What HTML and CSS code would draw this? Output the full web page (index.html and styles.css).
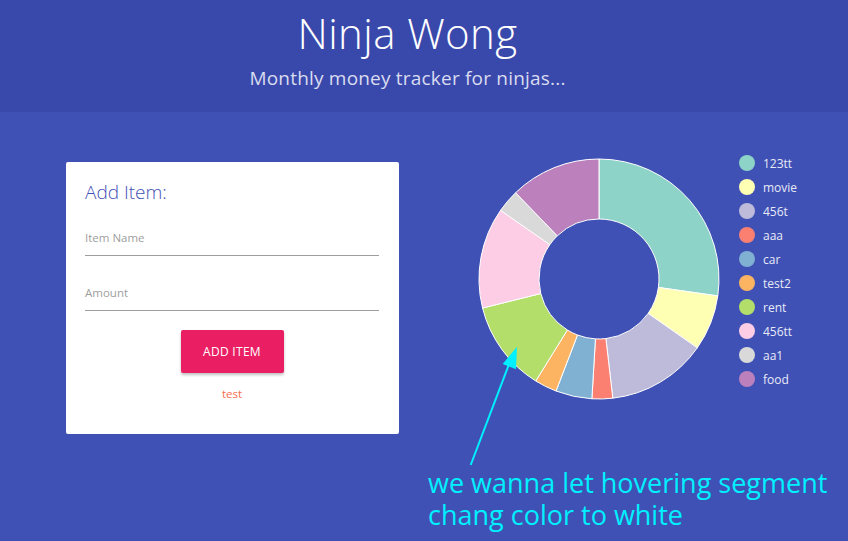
FILE: index.html
```html
<!DOCTYPE html>
<html>
<head>
<meta charset="utf-8">
<link rel="stylesheet" href="styles.css">
</head>
<body>
<header class="top">
  <h1 class="title">Ninja Wong</h1>
  <p class="subtitle">Monthly money tracker for ninjas...</p>
</header>
<main class="main">
  <section class="card">
    <h2 class="card-title">Add Item:</h2>
    <div class="field field-first"><span class="label">Item Name</span></div>
    <div class="field field-second"><span class="label">Amount</span></div>
    <div class="actions"><button class="btn">ADD ITEM</button></div>
    <p class="msg">test</p>
  </section>
  <svg class="donut" width="242" height="242" viewBox="-1 -1 242 242">
    <g stroke="#fff" stroke-width="1" stroke-linejoin="round">
      <path fill="#8dd3c7" d="M120 0 A120 120 0 0 1 238.80 136.91 L179.40 128.45 A60 60 0 0 0 120 60 Z"/>
      <path fill="#ffffb3" d="M238.80 136.91 A120 120 0 0 1 218.30 188.83 L169.15 154.41 A60 60 0 0 0 179.40 128.45 Z"/>
      <path fill="#bebada" d="M218.30 188.83 A120 120 0 0 1 133.79 239.20 L126.90 179.60 A60 60 0 0 0 169.15 154.41 Z"/>
      <path fill="#fb8072" d="M133.79 239.20 A120 120 0 0 1 112.88 239.79 L116.44 179.89 A60 60 0 0 0 126.90 179.60 Z"/>
      <path fill="#80b1d3" d="M112.88 239.79 A120 120 0 0 1 77.00 232.03 L98.50 176.01 A60 60 0 0 0 116.44 179.89 Z"/>
      <path fill="#fdb462" d="M77.00 232.03 A120 120 0 0 1 56.76 221.99 L88.38 170.99 A60 60 0 0 0 98.50 176.01 Z"/>
      <path fill="#b3de69" d="M56.76 221.99 A120 120 0 0 1 3.56 149.03 L61.78 134.52 A60 60 0 0 0 88.38 170.99 Z"/>
      <path fill="#fccde5" d="M3.56 149.03 A120 120 0 0 1 21.58 51.34 L70.79 85.67 A60 60 0 0 0 61.78 134.52 Z"/>
      <path fill="#d9d9d9" d="M21.58 51.34 A120 120 0 0 1 36.64 33.68 L78.32 76.84 A60 60 0 0 0 70.79 85.67 Z"/>
      <path fill="#bc80bd" d="M36.64 33.68 A120 120 0 0 1 120 0 L120 60 A60 60 0 0 0 78.32 76.84 Z"/>
    </g>
  </svg>
  <ul class="legend">
    <li class="legend-item"><span class="dot dot-1"></span>123tt</li>
    <li class="legend-item"><span class="dot dot-2"></span>movie</li>
    <li class="legend-item"><span class="dot dot-3"></span>456t</li>
    <li class="legend-item"><span class="dot dot-4"></span>aaa</li>
    <li class="legend-item"><span class="dot dot-5"></span>car</li>
    <li class="legend-item"><span class="dot dot-6"></span>test2</li>
    <li class="legend-item"><span class="dot dot-7"></span>rent</li>
    <li class="legend-item"><span class="dot dot-8"></span>456tt</li>
    <li class="legend-item"><span class="dot dot-9"></span>aa1</li>
    <li class="legend-item"><span class="dot dot-10"></span>food</li>
  </ul>
</main>
<svg class="arrow" width="60" height="130" viewBox="0 0 60 130">
  <line x1="10.7" y1="123" x2="51" y2="17" stroke="#00f0ff" stroke-width="2"/>
  <polygon points="57,4.7 42.7,22 56,27.3" fill="#00f0ff"/>
</svg>
<p class="note">we wanna let hovering segment<br>chang color to white</p>
</body>
</html>
```
FILE: styles.css
```css
html, body {
  margin: 0;
  padding: 0;
}
body {
  background: #3f51b5;
  font-family: "Open Sans", "Noto Sans", sans-serif;
  width: 848px;
  height: 541px;
  overflow: hidden;
  position: relative;
}
.top {
  background: #3949ab;
  height: 112px;
  box-sizing: border-box;
  padding: 8px 33px 0 0;
  text-align: center;
  color: #fff;
}
.title {
  margin: 0;
  font-weight: 300;
  font-size: 42px;
  line-height: 50px;
  letter-spacing: 0.4px;
}
.subtitle {
  margin: 8px 0 0;
  font-size: 19px;
  line-height: 24px;
  color: #d9dcf0;
  font-weight: 400;
  letter-spacing: 0.2px;
}
.main {
  display: flex;
  align-items: flex-start;
  padding: 39px 0 0 66px;
}
.card {
  width: 333px;
  height: 272px;
  margin-top: 11px;
  background: #fff;
  border-radius: 2px;
  box-sizing: border-box;
  padding: 18px 20px 0 19px;
}
.card-title {
  margin: 0;
  font-size: 19px;
  font-weight: 300;
  line-height: 24px;
  color: #3f51b5;
}
.field {
  border-bottom: 1px solid #9e9e9e;
  padding-bottom: 9px;
}
.field-first {
  margin-top: 26px;
}
.field-second {
  margin-top: 29px;
}
.label {
  display: block;
  font-size: 11.5px;
  line-height: 16px;
  color: #9e9e9e;
}
.actions {
  display: flex;
  justify-content: center;
  margin-top: 19px;
}
.btn {
  width: 103px;
  height: 43px;
  border: none;
  border-radius: 2px;
  background: #e91e63;
  color: #fff;
  font-family: inherit;
  font-size: 12px;
  letter-spacing: 0.3px;
  box-shadow: 0 2px 3px rgba(0, 0, 0, 0.25);
  padding: 0;
}
.msg {
  margin: 13px 0 0;
  text-align: center;
  font-size: 11.5px;
  line-height: 16px;
  color: #f56e4e;
}
.donut {
  display: block;
  margin: 7px 0 0 79px;
}
.legend {
  list-style: none;
  margin: 0 0 0 19px;
  padding: 0;
}
.legend-item {
  display: flex;
  align-items: center;
  gap: 8px;
  height: 24px;
  font-size: 12px;
  color: #e8eaf6;
}
.dot {
  width: 16px;
  height: 16px;
  border-radius: 50%;
  flex: none;
}
.dot-1 { background: #8dd3c7; }
.dot-2 { background: #ffffb3; }
.dot-3 { background: #bebada; }
.dot-4 { background: #fb8072; }
.dot-5 { background: #80b1d3; }
.dot-6 { background: #fdb462; }
.dot-7 { background: #b3de69; }
.dot-8 { background: #fccde5; }
.dot-9 { background: #d9d9d9; }
.dot-10 { background: #bc80bd; }
.arrow {
  position: absolute;
  left: 460px;
  top: 342px;
}
.note {
  position: absolute;
  left: 428px;
  top: 467px;
  margin: 0;
  font-size: 27px;
  line-height: 32px;
  color: #00f0ff;
  font-weight: 400;
}
```
